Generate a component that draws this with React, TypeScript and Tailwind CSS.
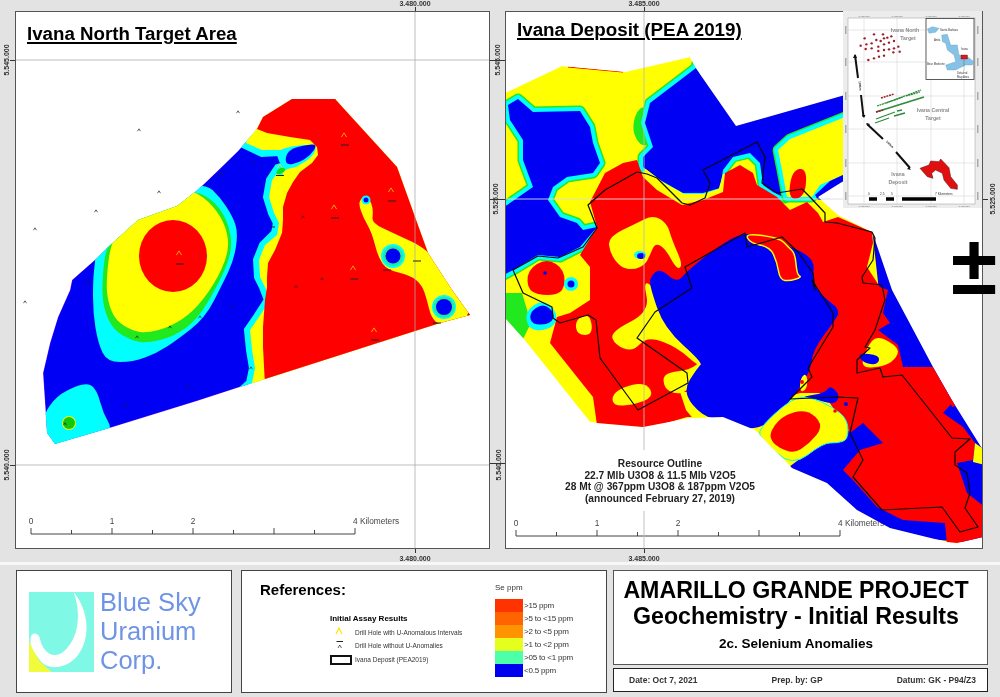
// Amarillo Grande geochemistry map sheet: two map panels over a title block.

type Pts = number[][];

const RED = "#ff0000";
const BLUE = "#0000f5";
const YELLOW = "#ffff00";
const CYAN = "#00ffff";
const GREEN = "#22e81e";

// rounds a traced outline, the contours in the picture have no hard corners
const smooth = (pts: Pts) => {
  const mid = (a: number[], b: number[]) => [(a[0] + b[0]) / 2, (a[1] + b[1]) / 2];
  const start = mid(pts[pts.length - 1], pts[0]);
  let d = `M${start[0]} ${start[1]}`;
  pts.forEach((p, i) => {
    const m = mid(p, pts[(i + 1) % pts.length]);
    d += `Q${p[0]} ${p[1]} ${m[0]} ${m[1]}`;
  });
  return d + "Z";
};

const poly = (pts: Pts) => "M" + pts.map((p) => p.join(" ")).join("L");

function Caret({ x, y, big, color }: { x: number; y: number; big?: boolean; color?: string }) {
  const s = big ? 2.6 : 1.5;
  return (
    <path
      d={`M${x - s} ${y + s * 0.8}L${x} ${y - s * 0.8}L${x + s} ${y + s * 0.8}`}
      fill="none"
      stroke={color ?? (big ? "#ffa500" : "#222")}
      strokeWidth={big ? 1 : 0.7}
    />
  );
}

function Scale({ x, y, label }: { x: number; y: number; label: string }) {
  return (
    <g fontFamily="'Liberation Sans', Arial, sans-serif" fontSize="8.300" fill="#444">
      <path d={`M${x} ${y}H${x + 324}`} stroke="#444" strokeWidth="1" />
      {[0, 1, 2, 3, 4, 5, 6, 7, 8].map((i) => (
        <path
          key={i}
          d={`M${x + i * 40.5} ${y}v${i % 2 ? -4 : -6}`}
          stroke="#333"
          strokeWidth="0.9"
        />
      ))}
      <text x={x} y={y - 10} textAnchor="middle">0</text>
      <text x={x + 81} y={y - 10} textAnchor="middle">1</text>
      <text x={x + 162} y={y - 10} textAnchor="middle">2</text>
      <text x={x + 322} y={y - 10}>{label}</text>
    </g>
  );
}

const LEFT_OUTLINE: Pts = [
  [292, 99], [335, 99], [397, 167], [415, 217], [428, 253], [452, 290], [470, 315], [440, 323],
  [265, 379], [240, 387], [197, 401], [113, 427], [55, 444], [47, 433], [43, 373], [50, 343],
  [58, 317], [70, 290], [72, 280], [97, 258], [107, 248], [138, 220], [177, 206], [195, 192],
  [205, 183], [238, 151], [257, 129], [263, 117],
];

const LEFT_SMALL = [
  [238, 112], [139, 130], [159, 192], [96, 211], [35, 229], [25, 302], [253, 163], [221, 174],
  [303, 217], [322, 279], [296, 287], [87, 283], [170, 327], [137, 337], [200, 317], [232, 307],
  [188, 387], [126, 405], [65, 424], [251, 368],
];

const LEFT_BIG = [
  [344, 135, 345, 145], [391, 190, 392, 201], [334, 207, 335, 218],
  [179, 253, 180, 264], [353, 268, 354, 279], [374, 330, 375, 340],
];

function NorthMap() {
  return (
    <svg className="block h-full w-full" viewBox="16 12 473 536">
      <Scale x={31} y={534} label="4 Kilometers" />
      <clipPath id="north-clip">
        <path d={poly(LEFT_OUTLINE)} />
      </clipPath>
      <g clipPath="url(#north-clip)">
        <path d={poly(LEFT_OUTLINE)} fill={BLUE} stroke="#c040ff" strokeWidth="0.6" />
        {/* west bullseye */}
        <path
          fill={CYAN}
          d={smooth([[205, 183], [220, 197], [233, 217], [238, 233], [234, 260], [222, 285], [205, 318], [177, 340], [157, 353], [133, 362], [107, 362], [98, 343], [93, 313], [93, 280], [95, 262], [97, 240], [150, 190]])}
        />
        <path
          fill={GREEN}
          d={smooth([[195, 190], [217, 203], [230, 227], [232, 253], [218, 285], [197, 320], [173, 337], [147, 343], [133, 341], [113, 330], [103, 307], [102, 280], [107, 240], [150, 190]])}
        />
        <path
          fill={YELLOW}
          d={smooth([[193, 190], [213, 205], [227, 228], [229, 253], [214, 285], [193, 312], [170, 327], [147, 333], [133, 331], [116, 321], [108, 303], [106, 280], [112, 235], [150, 180]])}
        />
        <ellipse cx="173" cy="256" rx="34" ry="36" fill={RED} />
        {/* south-west corner */}
        <path
          fill={CYAN}
          d={smooth([[46, 410], [60, 393], [87, 382], [97, 390], [103, 413], [114, 432], [80, 450], [40, 450], [42, 425]])}
        />
        <circle cx="69" cy="423" r="7" fill={YELLOW} />
        <circle cx="69" cy="423" r="6" fill="#10c810" />
        {/* east side */}
        <path
          fill={YELLOW}
          stroke={CYAN}
          strokeWidth="8"
          d={poly([[245, 145], [262, 153], [280, 152], [283, 160], [288, 165], [278, 168], [270, 180], [267, 197], [272, 213], [277, 223], [275, 233], [263, 245], [257, 260], [258, 277], [263, 287], [268, 300], [257, 317], [248, 330], [250, 350], [253, 368], [250, 383], [240, 392], [470, 330], [470, 100], [260, 100]]) + "Z"}
        />
        <path
          fill={YELLOW}
          d={poly([[246, 143], [262, 150], [283, 150], [290, 165], [280, 170], [272, 180], [269, 197], [274, 213], [279, 223], [277, 235], [265, 245], [259, 260], [260, 277], [265, 287], [270, 300], [259, 317], [250, 330], [252, 350], [255, 368], [252, 383], [245, 392], [470, 330], [470, 100], [260, 100]]) + "Z"}
        />
        <path
          fill={RED}
          d={poly([[257, 129], [267, 133], [290, 137], [310, 140], [317, 147], [318, 155], [312, 163], [300, 172], [293, 182], [287, 193], [283, 207], [283, 220], [282, 233], [275, 250], [268, 263], [267, 277], [267, 287], [265, 300], [263, 327], [263, 347], [265, 385], [470, 330], [470, 90], [260, 90]]) + "Z"}
        />
        <path
          fill={YELLOW}
          d={smooth([[360, 200], [365, 195], [372, 203], [373, 213], [372, 223], [393, 233], [430, 250], [456, 290], [474, 318], [440, 326], [431, 317], [427, 300], [422, 285], [410, 275], [387, 270], [378, 257], [372, 233], [363, 217], [359, 205]])}
        />
        <path fill={CYAN} d={smooth([[275, 152], [290, 146], [318, 144], [312, 158], [295, 167], [285, 176], [277, 175], [283, 162]])} />
        <path fill={YELLOW} d={smooth([[282, 170], [300, 166], [290, 172], [283, 180]])} />
        <path fill="#10e010" d={smooth([[277, 169], [284, 167], [286, 171], [276, 176]])} />
        <path fill={BLUE} d={smooth([[285, 158], [290, 149], [305, 145], [318, 144], [310, 156], [298, 163], [287, 165]])} />
        <circle cx="393" cy="256" r="12" fill={CYAN} />
        <circle cx="393" cy="256" r="10" fill="#20e8a0" />
        <circle cx="393" cy="256" r="7.5" fill={BLUE} />
        <circle cx="366" cy="200" r="4.5" fill={CYAN} />
        <circle cx="366" cy="200" r="2.5" fill={BLUE} />
        <circle cx="444" cy="307" r="12" fill={CYAN} />
        <circle cx="444" cy="307" r="10.5" fill="#20e8a0" />
        <circle cx="444" cy="307" r="8" fill={BLUE} />
        <path d="M467 315l3-3 2 3z" fill={RED} />
      </g>
      <path d="M16 60H489M415 12V548M16 465H489" stroke="#aaaaaa" strokeWidth="0.9" opacity="0.85" fill="none" />
      {LEFT_SMALL.map((p) => (
        <Caret key={p.join()} x={p[0]} y={p[1]} />
      ))}
      {LEFT_BIG.map((p) => (
        <g key={p.join()}>
          <Caret x={p[0]} y={p[1]} big />
          <path d={`M${p[2] - 4} ${p[3]}h8`} stroke="#222" strokeWidth="1" />
        </g>
      ))}
      <Caret x={280} y={166} big color="#d0e040" />
      <path d="M276 175.500h8M413 261h8M383 270h8M433 323h8M271 227h4" stroke="#222" strokeWidth="1" />
    </svg>
  );
}

const RIGHT_OUTLINE: Pts = [
  [505, 93], [562, 66], [625, 72], [690, 57], [695, 67], [736, 126], [845, 95], [880, 85],
  [880, 170], [845, 180], [818, 197], [838, 215], [872, 232], [875, 240], [892, 290], [933, 367],
  [953, 402], [983, 450], [983, 537], [957, 543], [947, 542], [890, 528], [857, 510], [827, 483],
  [792, 468], [755, 430], [723, 417], [690, 418], [643, 427], [597, 423], [590, 422], [523, 338],
  [505, 318],
];

const DEPOSIT: Pts = [
  [513, 270], [538, 256], [558, 258], [583, 247], [597, 228], [588, 205], [605, 190], [637, 172],
  [647, 174], [657, 178], [682, 203], [690, 205], [705, 198], [710, 183], [703, 170], [757, 142],
  [765, 157], [762, 183], [777, 193], [802, 189], [810, 197], [825, 213], [825, 222], [837, 223],
  [872, 232], [875, 238], [873, 260], [862, 277], [863, 283], [882, 285], [885, 300], [875, 330],
  [865, 347], [870, 348], [857, 360], [857, 373], [880, 368], [883, 377], [902, 375], [952, 438],
  [970, 439], [955, 452], [955, 465], [967, 473], [970, 493], [965, 508], [978, 527], [960, 532],
  [942, 507], [882, 510], [853, 477], [863, 460], [850, 433], [858, 398], [837, 397], [790, 399],
  [812, 377], [808, 368], [833, 327], [833, 313], [812, 280], [815, 290], [813, 273], [798, 252],
  [782, 237], [747, 247], [745, 233], [685, 267], [692, 288], [655, 312], [637, 338], [687, 373],
  [688, 383], [638, 410], [600, 358], [596, 320], [588, 315], [560, 323], [553, 318], [552, 307],
  [523, 293],
];

// draws a contour: thin green, then a cyan band, then the fill
function Band({ d, fill }: { d: string; fill: string }) {
  return (
    <g strokeLinejoin="round">
      <path d={d} fill="none" stroke={GREEN} strokeWidth="11" />
      <path d={d} fill="none" stroke={CYAN} strokeWidth="8" />
      <path d={d} fill={fill} />
    </g>
  );
}

function DepositMap() {
  return (
    <svg className="block h-full w-full" viewBox="506 12 476 536">
      <Scale x={516} y={536} label="4 Kilometers" />
      <clipPath id="deposit-clip">
        <path d={poly(RIGHT_OUTLINE)} />
      </clipPath>
      <g clipPath="url(#deposit-clip)">
        <path d={poly(RIGHT_OUTLINE)} fill={YELLOW} />
        <path d="M568 67L623 72" stroke={RED} strokeWidth="1.2" />
        {/* blue to the north-west, a contour around it */}
        <Band
          fill={BLUE}
          d={poly([[508, 105], [518, 99], [533, 112], [580, 111], [590, 127], [593, 143], [600, 163], [593, 173], [567, 177], [553, 187], [548, 200], [560, 217], [577, 223], [583, 230], [597, 227], [580, 247], [560, 257], [538, 255], [513, 270], [500, 277], [500, 210], [533, 187], [523, 160], [523, 140], [510, 120]]) + "Z"}
        />
        <path fill={GREEN} d={smooth([[636, 112], [645, 105], [648, 125], [652, 145], [640, 146], [632, 130]])} />
        <Band
          fill={BLUE}
          d={poly([[700, 50], [745, 110], [850, 75], [900, 70], [880, 117], [790, 137], [775, 147], [780, 173], [785, 198], [773, 192], [763, 185], [760, 163], [750, 153], [733, 157], [723, 170], [720, 188], [703, 193], [683, 193], [660, 180], [643, 167], [643, 157], [653, 147], [645, 123], [650, 103], [696, 68]]) + "Z"}
        />
        <Band
          fill={YELLOW}
          d={poly([[850, 115], [790, 139], [778, 150], [782, 170], [787, 197], [812, 197], [820, 185], [850, 172]]) + "Z"}
        />
        <path d={poly([[845, 174], [830, 181], [815, 195], [818, 200], [850, 200]]) + "Z"} fill={BLUE} />
        <path d={poly([[851, 90], [880, 85], [880, 180], [818, 200], [851, 175]]) + "Z"} fill={BLUE} />
        {/* blue along the south and east rim */}
        <path
          fill={BLUE}
          d={poly([[872, 228], [895, 290], [936, 367], [956, 402], [990, 450], [990, 545], [890, 535], [785, 470], [825, 440], [850, 430], [880, 300]]) + "Z"}
        />
        {/* green corner and small lows, west edge */}
        <path fill={GREEN} d={poly([[500, 293], [522, 293], [531, 323], [523, 339], [500, 320]]) + "Z"} />
        <path fill={CYAN} d={smooth([[524, 312], [543, 299], [558, 313], [554, 328], [530, 332]])} />
        <path fill={BLUE} d={smooth([[529, 313], [543, 303], [555, 313], [551, 324], [532, 325]])} />
        <path fill={RED} d={smooth([[527, 270], [547, 258], [565, 270], [564, 292], [548, 296], [528, 292]])} />
        <circle cx="545" cy="273" r="1.8" fill={BLUE} />
        <circle cx="571" cy="284" r="7" fill={CYAN} />
        <circle cx="571" cy="284" r="3.5" fill={BLUE} />
        <path fill={RED} d="M574 311l7 0-3 4z" />
        {/* yellow between the blue low and the high */}
        <path d="M643 172L660 185L683 198L703 198L722 192L727 175" fill="none" stroke={YELLOW} strokeWidth="8" />
        {/* the large high */}
        <path
          fill={RED}
          d={poly([[590, 202], [605, 173], [623, 163], [637, 160], [643, 177], [657, 190], [682, 205], [703, 200], [723, 192], [725, 173], [740, 165], [753, 173], [757, 185], [777, 197], [790, 210], [807, 202], [818, 213], [823, 222], [838, 217], [872, 232], [873, 243], [867, 267], [880, 287], [888, 290], [883, 313], [890, 323], [878, 330], [898, 345], [903, 367], [933, 367], [953, 402], [943, 413], [963, 427], [975, 443], [973, 460], [957, 463], [967, 493], [985, 507], [985, 537], [957, 545], [947, 545], [945, 523], [903, 520], [877, 507], [853, 480], [843, 470], [860, 450], [883, 443], [863, 423], [850, 433], [823, 393], [800, 393], [720, 417], [687, 417], [643, 430], [597, 425], [593, 397], [577, 377], [550, 343], [557, 317], [570, 313], [590, 300], [590, 267], [580, 255], [597, 227]]) + "Z"}
        />
        <path fill={RED} d={smooth([[792, 170], [807, 168], [805, 197], [788, 200]])} />
        {/* yellow inside the high */}
        <path
          fill={YELLOW}
          d={smooth([[608, 237], [637, 223], [653, 215], [667, 223], [672, 240], [683, 265], [677, 270], [665, 248], [655, 243], [650, 255], [645, 265], [633, 270], [620, 267], [610, 253]])}
        />
        <ellipse cx="640" cy="255" rx="6" ry="4" fill={CYAN} />
        <ellipse cx="641" cy="256" rx="4" ry="3" fill={BLUE} />
        <path
          fill={YELLOW}
          d={smooth([[643, 280], [655, 288], [658, 315], [685, 345], [708, 362], [700, 368], [677, 347], [647, 336], [633, 352], [615, 345], [610, 332], [650, 312]])}
        />
        <path fill={YELLOW} d={smooth([[663, 373], [690, 370], [702, 360], [696, 376], [687, 392], [675, 394], [664, 388]])} />
        <path fill={YELLOW} d={poly([[680, 392], [692, 392], [708, 417], [695, 421], [686, 410]]) + "Z"} />
        <path fill={YELLOW} d={smooth([[575, 320], [590, 313], [593, 335], [577, 335]])} />
        <path fill={YELLOW} d={smooth([[628, 385], [647, 383], [654, 397], [633, 405], [613, 406], [612, 394]])} />
        {/* central low */}
        <path
          fill={BLUE}
          d={smooth([[686, 272], [717, 247], [745, 231], [770, 240], [800, 250], [815, 262], [812, 280], [823, 297], [841, 310], [833, 323], [813, 350], [810, 373], [792, 398], [780, 413], [755, 432], [723, 419], [703, 417], [682, 392], [698, 367], [703, 363], [664, 328], [650, 287], [650, 277], [660, 268], [677, 283]])}
        />
        <path
          fill={RED}
          stroke={YELLOW}
          strokeWidth="1.5"
          d={smooth([[745, 233], [780, 238], [788, 247], [795, 253], [797, 275], [802, 277], [790, 281], [780, 280], [777, 262], [770, 247], [750, 243]])}
        />
        <path fill={YELLOW} d={smooth([[800, 380], [805, 373], [808, 380], [806, 390], [800, 392]])} />
        <circle cx="802" cy="382" r="2" fill={RED} />
        {/* south blob */}
        <path fill={BLUE} d={smooth([[800, 397], [825, 393], [830, 385], [840, 395], [835, 405], [815, 399]])} />
        <path
          fill={YELLOW}
          stroke={CYAN}
          strokeWidth="1"
          d={smooth([[757, 430], [792, 398], [810, 397], [833, 407], [848, 420], [848, 440], [837, 443], [823, 443], [792, 467], [763, 440]])}
        />
        <path fill={RED} d={smooth([[767, 440], [777, 420], [797, 410], [813, 413], [823, 427], [810, 443], [792, 455]])} />
        <circle cx="835" cy="411" r="1.8" fill={RED} />
        <circle cx="846" cy="404" r="2" fill={BLUE} />
        <path fill={YELLOW} d={smooth([[867, 347], [877, 335], [900, 348], [895, 360], [882, 367], [860, 368]])} />
        <path fill={BLUE} d={smooth([[857, 353], [880, 355], [878, 365], [863, 363]])} />
        <path fill={YELLOW} d={poly([[975, 443], [985, 450], [985, 465], [973, 462]]) + "Z"} />
        <path fill={RED} d="M950 402l6-5 3 8-7 2z" />
      </g>
      <path d="M506 199H982" stroke="#dddddd" strokeWidth="0.9" />
      <path d="M644 12V548" stroke="#bbbbbb" strokeWidth="0.9" />
      <path d={poly(DEPOSIT) + "Z"} fill="none" stroke="#0a0a0a" strokeWidth="1.2" strokeLinejoin="round" />
    </svg>
  );
}

const INSET_RED = [
  [77, 100], [105, 88], [132, 88], [112, 105], [65, 122], [82, 118], [98, 115], [125, 108],
  [135, 100], [145, 98], [157, 94], [80, 132], [98, 130], [118, 125], [135, 118], [150, 113],
  [165, 108], [118, 138], [135, 135], [150, 133], [165, 130], [178, 125], [163, 142], [182, 140],
  [88, 165], [105, 160], [120, 155], [135, 152],
];

const INSET_X = [865, 898, 932, 965];
const INSET_Y = [30, 62, 96, 129, 163, 196];

function Inset() {
  return (
    <svg className="block h-full w-full font-['Liberation_Sans',Arial,sans-serif]" viewBox="844 11 139 197">
      <rect x="844" y="11" width="139" height="197" fill="#ececec" />
      <rect x="849" y="18" width="127" height="186" fill="#fff" stroke="#999" strokeWidth="0.5" />
      {INSET_X.map((x) => (
        <g key={x}>
          <path d={`M${x} 18V204`} stroke="#ccc" strokeWidth="0.5" />
          <text x={x} y="16.500" fontSize="2.500" textAnchor="middle" fill="#666">1.465.000</text>
          <text x={x} y="207" fontSize="2.500" textAnchor="middle" fill="#666">1.465.000</text>
        </g>
      ))}
      {INSET_Y.map((y) => (
        <g key={y}>
          <path d={`M849 ${y}H976`} stroke="#ccc" strokeWidth="0.5" />
          <rect x="846" y={y - 4} width="1.500" height="8" fill="#aaa" />
          <rect x="978" y={y - 4} width="1.500" height="8" fill="#aaa" />
        </g>
      ))}
      {INSET_RED.map((p) => (
        <circle key={p.join()} cx={840 + p[0] / 3} cy={5 + p[1] / 3} r="1.200" fill="#9c1c28" />
      ))}
      <g stroke="#2f8a3a" strokeWidth="1.300" fill="none">
        <path d="M887 103L922 90" strokeDasharray="2 .6" />
        <path d="M878 106L904 97M907 96L921 92" strokeDasharray="2 .6" />
        <path d="M877 112L925 97" strokeWidth="1.700" />
        <path d="M877 119L896 112M898 111L903 110" />
        <path d="M876 123L890 118M895 116L906 113" />
      </g>
      <path d="M877 112L884 110M882 98L895 94" stroke="#a02030" strokeWidth="1.500" strokeDasharray="2 .8" />
      <g stroke="#111" strokeWidth="2" fill="none">
        <path d="M856 55L859 78M862 95L864.500 117" />
        <path d="M868 124L884 139M897 152L911 168" />
      </g>
      <path d="M856 54l-2 4h4zM865 118l-2-3h3.500zM867 123l4 1-2 2zM912 170l-4-1 2-2z" fill="#111" />
      <text transform="translate(860 86) rotate(85)" fontSize="3" textAnchor="middle" fill="#222" fontWeight="bold">100km</text>
      <text transform="translate(890 145) rotate(45)" fontSize="3" textAnchor="middle" fill="#222" fontWeight="bold">100km</text>
      <path
        d={poly([[243, 490], [270, 480], [275, 468], [300, 470], [305, 462], [330, 488], [335, 515], [355, 540], [355, 553], [335, 550], [315, 525], [310, 505], [290, 495], [278, 505], [282, 520], [265, 515]].map((p) => [840 + p[0] / 3, 5 + p[1] / 3])) + "Z"}
        fill="#e01010"
        stroke="#501010"
        strokeWidth="0.5"
      />
      <g fontSize="5.200" fill="#8a8a8a" textAnchor="middle" fontWeight="bold">
        <text x="906" y="32">Ivana North</text>
        <text x="909" y="40">Target</text>
        <text x="934" y="112">Ivana Central</text>
        <text x="934" y="120">Target</text>
        <text x="899" y="176">Ivana</text>
        <text x="899" y="184">Deposit</text>
      </g>
      <g fontSize="3.200" fill="#333">
        <text x="869" y="195">0</text>
        <text x="881" y="195">2.5</text>
        <text x="892" y="195">5</text>
        <text x="936" y="195">7 Kilometers</text>
      </g>
      <path d="M870 199h8M887 199h8M903 199h34" stroke="#000" strokeWidth="3.500" />
      {/* location map */}
      <rect x="927" y="18.500" width="48" height="61" fill="#fff" stroke="#333" strokeWidth="0.8" />
      <path
        d={poly([[265, 72], [280, 65], [300, 70], [290, 82], [270, 85]].map((p) => [840 + p[0] / 3, 5 + p[1] / 3])) + "Z"}
        fill="#86c2e6"
        stroke="#4f8fb5"
        strokeWidth="0.3"
      />
      <path
        d={poly([[308, 90], [325, 88], [335, 120], [355, 120], [360, 150], [385, 155], [405, 170], [400, 180], [380, 180], [350, 195], [325, 195], [320, 180], [350, 170], [345, 150], [325, 135], [320, 115], [310, 110]].map((p) => [840 + p[0] / 3, 5 + p[1] / 3])) + "Z"}
        fill="#86c2e6"
        stroke="#4f8fb5"
        strokeWidth="0.3"
      />
      <rect x="962" y="55" width="6.500" height="4" fill="#e01818" stroke="#500" strokeWidth="0.3" />
      <path d="M965 59V71" stroke="#333" strokeWidth="0.3" />
      <g fontSize="2.800" fill="#333">
        <text x="941" y="31">Santa Barbara</text>
        <text x="935" y="41">Anita</text>
        <text x="962" y="50">Ivana</text>
        <text x="928" y="65">Bear Medicine</text>
        <text x="958" y="74">Detailed</text>
        <text x="958" y="78">Map Area</text>
      </g>
    </svg>
  );
}

// the graticule values and ticks in the grey margin round the two maps
function Graticule() {
  const vertical = [
    [6, 60, "5.545.000"], [6, 465, "5.540.000"], [497, 60, "5.545.000"],
    [495, 199, "5.525.000"], [498, 465, "5.540.000"], [992, 199, "5.525.000"],
  ] as const;
  return (
    <svg
      className="pointer-events-none absolute inset-0 h-full w-full font-['Liberation_Sans',Arial,sans-serif]"
      viewBox="0 0 1000 697"
    >
      <g fontSize="7" fontWeight="bold" fill="#333" textAnchor="middle">
        <text x="415" y="6">3.480.000</text>
        <text x="415" y="561">3.480.000</text>
        <text x="644" y="6">3.485.000</text>
        <text x="644" y="561">3.485.000</text>
        {vertical.map(([x, y, label]) => (
          <text key={`${x}-${y}`} transform={`translate(${x + 2.5} ${y}) rotate(-90)`}>
            {label}
          </text>
        ))}
      </g>
      <path
        d="M10 60.500h5M10 465.500h5M490 60.500h15M490 199.500h15M490 463.500h15M983 199.500h5M415.500 7v4M644.500 7v4M415.500 549v4M644.500 549v4"
        stroke="#333"
        strokeWidth="1"
      />
    </svg>
  );
}

const LEGEND = [
  ["#ff3300", ">15 ppm"],
  ["#ff6400", ">5 to <15 ppm"],
  ["#ff9400", ">2 to <5 ppm"],
  ["#e4ff1e", ">1 to <2 ppm"],
  ["#4dffa8", ">05 to <1 ppm"],
  ["#0000f0", "<0.5 ppm"],
];

export default function App() {
  return (
    <div className="relative h-[697px] w-[1000px] overflow-hidden bg-[#e3e3e3] font-['Liberation_Sans',Arial,sans-serif] text-black blur-[0.4px]">
      <div className="flex gap-[15px] pl-[15px] pt-[11px]">
        <div className="relative h-[538px] w-[475px] border border-[#555] bg-white">
          <NorthMap />
          <h2 className="absolute left-[11px] top-[10px] text-[18.700px] leading-[23px] font-bold underline decoration-[1.500px] underline-offset-[2px]">
            Ivana North Target Area
          </h2>
        </div>
        <div className="relative h-[538px] w-[478px] border border-[#555] bg-white">
          <DepositMap />
          <h2 className="absolute left-[11px] top-[6px] text-[18.800px] leading-[23px] font-bold underline decoration-[1.500px] underline-offset-[2px]">
            Ivana Deposit (PEA 2019)
          </h2>
          <div className="absolute right-0 top-[-1px] h-[197px] w-[139px]">
            <Inset />
          </div>
          <div className="absolute left-[54px] top-[438px] w-[200px] bg-white pt-[8px] pb-[6px] text-center text-[10.200px] leading-[11.700px] font-bold text-[#222]">
            <p>Resource Outline</p>
            <p>22.7 Mlb U3O8 &amp; 11.5 Mlb V2O5</p>
            <p>28 Mt @ 367ppm U3O8 &amp; 187ppm V2O5</p>
            <p>(announced February 27, 2019)</p>
          </div>
        </div>
      </div>

      <Graticule />

      <span className="absolute left-[951px] top-[220px] text-[84px] leading-[90px] font-bold">±</span>

      <div className="mt-[13px] h-[3px] bg-[#f7f7f7]" />

      <div className="mt-[5px] flex pl-[16px]">
        {/* logo */}
        <div className="flex h-[123px] w-[216px] items-center gap-[6px] border border-[#444] bg-white pl-[12px]">
          <svg className="h-[80px] w-[65px] shrink-0" viewBox="29.500 591 65 80">
            <rect x="29.500" y="591" width="65" height="80" fill="#80f8e6" />
            <path d="M29.500 640L29.500 671H52L40 660Z" fill="#f0fb3c" />
            <path
              fill="#fff"
              d="M74 591C90 610 92 640 76 657C66 667 50 670 41 660C36 653 30 646 31 637C32 630 40 631 41 640C44 650 52 658 62 652C76 643 84 618 74 591Z"
            />
          </svg>
          <div className="text-[25.500px] leading-[29px] text-[#6f94e6]">
            <p>Blue Sky</p>
            <p>Uranium</p>
            <p>Corp.</p>
          </div>
        </div>

        {/* references */}
        <div className="ml-[9px] flex h-[123px] w-[366px] border border-[#444] bg-white pl-[18px]">
          <div className="w-[235px] pt-[10px]">
            <p className="text-[15px] leading-[18px] font-bold">References:</p>
            <div className="ml-[70px] mt-[13px] text-[6.500px] leading-[13px] text-[#333]">
              <p className="mb-[1px] text-[8px] font-bold text-black">Initial Assay Results</p>
              <div className="flex items-center">
                <svg className="h-[12px] w-[25px]" viewBox="0 0 25 12">
                  <path d="M6 7L9 1L12 7" fill="none" stroke="#ffe600" strokeWidth="1.200" />
                </svg>
                <span>Drill Hole with U-Anomalous Intervals</span>
              </div>
              <div className="flex items-center">
                <svg className="h-[12px] w-[25px]" viewBox="0 0 25 12">
                  <path d="M6.500 1.500H13" stroke="#222" strokeWidth="1" />
                  <path d="M8 8L9.700 5L11.500 8" fill="none" stroke="#222" strokeWidth="0.700" />
                </svg>
                <span>Drill Hole without U-Anomalies</span>
              </div>
              <div className="mt-[1px] flex items-center">
                <span className="mr-[3px] h-[10px] w-[22px] border-2 border-[#111]" />
                <span>Ivana Deposit (PEA2019)</span>
              </div>
            </div>
          </div>
          <div className="pt-[12px]">
            <p className="mb-[6px] text-[8px] leading-[10px] text-[#333]">Se ppm</p>
            {LEGEND.map(([color, label]) => (
              <div key={label} className="flex h-[13px] items-center text-[8px] tracking-[-0.2px] text-[#333]">
                <span className="mr-px h-[13px] w-[28px]" style={{ backgroundColor: color }} />
                {label}
              </div>
            ))}
          </div>
        </div>

        {/* title block */}
        <div className="ml-[6px] flex w-[375px] flex-col gap-[3px]">
          <div className="flex h-[95px] flex-col items-center border border-[#555] bg-white pr-[9px] pt-[6px] font-bold">
            <p className="text-[23.200px] leading-[26px]">AMARILLO GRANDE PROJECT</p>
            <p className="text-[23.200px] leading-[26px]">Geochemistry - Initial Results</p>
            <p className="mt-[8px] text-[13.500px] leading-[14px]">2c. Selenium Anomalies</p>
          </div>
          <div className="flex h-[24px] items-center justify-between border border-[#222] bg-white pl-[15px] pr-[11px] text-[8.500px] font-bold text-[#333]">
            <span>Date: Oct 7, 2021</span>
            <span>Prep. by: GP</span>
            <span>Datum: GK - P94/Z3</span>
          </div>
        </div>
      </div>
    </div>
  );
}
